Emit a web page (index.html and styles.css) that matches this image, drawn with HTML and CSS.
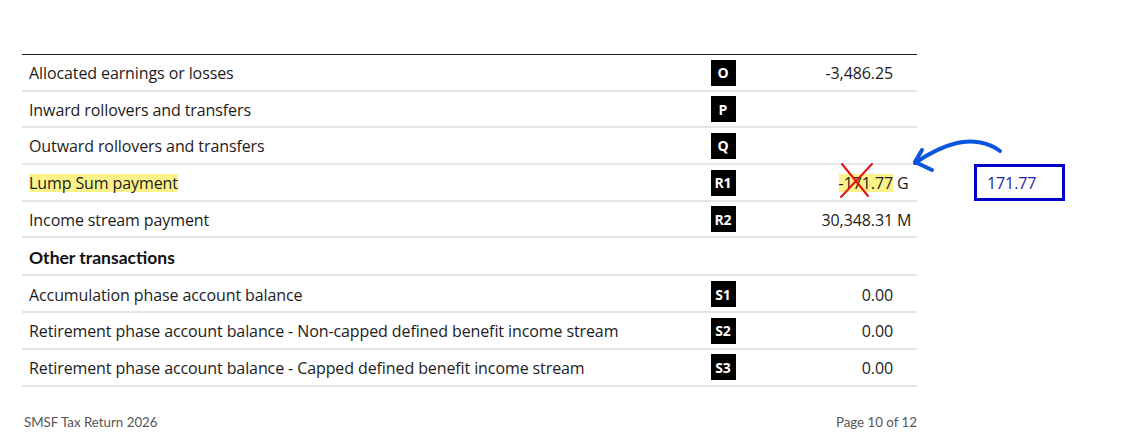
FILE: index.html
```html
<!DOCTYPE html>
<html lang="en">
<head>
<meta charset="utf-8">
<title>SMSF Tax Return 2026 - Page 10</title>
<link rel="stylesheet" href="styles.css">
</head>
<body>
<div class="page">
  <div class="table">
    <div class="row">
      <div class="label">Allocated earnings or losses</div>
      <div class="code"><span class="badge">O</span></div>
      <div class="amount">-3,486.25</div>
      <div class="suffix"></div>
    </div>
    <div class="row">
      <div class="label">Inward rollovers and transfers</div>
      <div class="code"><span class="badge">P</span></div>
      <div class="amount"></div>
      <div class="suffix"></div>
    </div>
    <div class="row">
      <div class="label">Outward rollovers and transfers</div>
      <div class="code"><span class="badge">Q</span></div>
      <div class="amount"></div>
      <div class="suffix"></div>
    </div>
    <div class="row">
      <div class="label"><span class="hl">Lump Sum payment</span></div>
      <div class="code"><span class="badge">R1</span></div>
      <div class="amount"><span class="hl">-171.77</span></div>
      <div class="suffix">G</div>
    </div>
    <div class="row">
      <div class="label">Income stream payment</div>
      <div class="code"><span class="badge">R2</span></div>
      <div class="amount">30,348.31</div>
      <div class="suffix">M</div>
    </div>
    <div class="row heading">
      <div class="label">Other transactions</div>
    </div>
    <div class="row">
      <div class="label">Accumulation phase account balance</div>
      <div class="code"><span class="badge">S1</span></div>
      <div class="amount">0.00</div>
      <div class="suffix"></div>
    </div>
    <div class="row">
      <div class="label">Retirement phase account balance - Non-capped defined benefit income stream</div>
      <div class="code"><span class="badge">S2</span></div>
      <div class="amount">0.00</div>
      <div class="suffix"></div>
    </div>
    <div class="row">
      <div class="label">Retirement phase account balance - Capped defined benefit income stream</div>
      <div class="code"><span class="badge">S3</span></div>
      <div class="amount">0.00</div>
      <div class="suffix"></div>
    </div>
  </div>
  <footer class="footer">
    <span>SMSF Tax Return 2026</span>
    <span>Page 10 of 12</span>
  </footer>
</div>

<div class="correction">171.77</div>

<svg class="annot" width="1130" height="447" viewBox="0 0 1130 447" aria-hidden="true">
  <g fill="none" stroke="#e81212" stroke-width="2" stroke-linecap="round">
    <line x1="842" y1="164" x2="868" y2="196"/>
    <line x1="872" y1="164" x2="841" y2="197"/>
  </g>
  <g fill="none" stroke="#0a55e0" stroke-width="4" stroke-linecap="round" stroke-linejoin="round">
    <path d="M1000 151 C 990 143, 972 139, 957 143 C 940 147, 928 154, 915 163"/>
    <path d="M922 150 L 915 162 L 932 170"/>
  </g>
</svg>
</body>
</html>
```

FILE: styles.css
```css
html, body {
  margin: 0;
  padding: 0;
  background: #ffffff;
}

.page {
  width: 895px;
  padding: 54px 0 0 22px;
  font-family: "Open Sans", "Noto Sans", sans-serif;
  color: #1c1c1c;
}

.table {
  border-top: 1px solid #1a1a1a;
}

.row {
  display: grid;
  grid-template-columns: 1fr 46px 147px 24px;
  align-items: center;
  box-sizing: border-box;
  height: 36.7px;
  padding-top: 1.5px;
  border-bottom: 2px solid #e4e4ea;
  font-size: 16px;
  letter-spacing: -0.1px;
}

.row.heading {
  height: 38px;
}

.label {
  padding-left: 7px;
  white-space: nowrap;
}

.heading .label {
  font-family: "Lato", sans-serif;
  font-weight: 700;
  font-size: 17.5px;
  letter-spacing: 0;
  color: #111;
}

.code {
  display: flex;
  justify-content: center;
  margin-top: -1px;
}

.badge {
  display: flex;
  align-items: center;
  justify-content: center;
  width: 25px;
  height: 26px;
  background: #000;
  color: #fff;
  font-weight: 700;
  font-size: 14px;
  letter-spacing: 0;
}

.amount {
  text-align: right;
}

.suffix {
  padding-left: 4px;
}

.hl {
  display: inline-block;
  background: #fbf38a;
  line-height: 18px;
  height: 18px;
}

.footer {
  display: flex;
  justify-content: space-between;
  margin-top: 27px;
  padding-left: 2px;
  font-family: "Lato", sans-serif;
  font-size: 13.3px;
  color: #555;
}

.correction {
  position: absolute;
  left: 974px;
  top: 164px;
  box-sizing: border-box;
  width: 91px;
  height: 37px;
  border: 3px solid #0000c8;
  padding-left: 10px;
  display: flex;
  align-items: center;
  font-family: "Open Sans", sans-serif;
  font-size: 16px;
  letter-spacing: -0.1px;
  color: #1e1eaa;
}

.annot {
  position: absolute;
  left: 0;
  top: 0;
  pointer-events: none;
}
```
